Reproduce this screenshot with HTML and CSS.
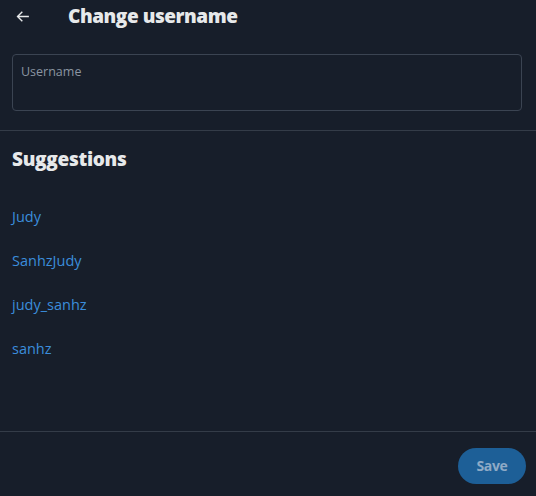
FILE: index.html
```html
<!DOCTYPE html>
<html lang="en">
<head>
<meta charset="utf-8">
<title>Change username</title>
<link rel="stylesheet" href="styles.css">
</head>
<body>
<div class="page">
  <header class="header">
    <svg class="back" viewBox="0 0 24 24" width="17" height="17" aria-hidden="true">
      <path d="M7.414 13l5.043 5.04-1.414 1.42L3.586 12l7.457-7.46 1.414 1.42L7.414 11H21v2H7.414z" fill="#e7e9ea"/>
    </svg>
    <h1 class="title">Change username</h1>
  </header>
  <div class="field">
    <span class="label">Username</span>
  </div>
  <hr class="divider">
  <h2 class="heading">Suggestions</h2>
  <ul class="list">
    <li class="item">Judy</li>
    <li class="item">SanhzJudy</li>
    <li class="item">judy_sanhz</li>
    <li class="item">sanhz</li>
  </ul>
  <hr class="divider bottom">
  <footer class="footer">
    <button class="save">Save</button>
  </footer>
</div>
</body>
</html>
```
FILE: styles.css
```css
html, body {
  margin: 0;
  padding: 0;
  background: #171e2a;
}
.page {
  width: 536px;
  height: 496px;
  font-family: "Open Sans", "Liberation Sans", sans-serif;
  color: #e7e9ea;
}
.header {
  height: 32px;
  display: flex;
  align-items: center;
  padding-left: 14px;
}
.back {
  display: block;
}
.title {
  margin: 0 0 0 37px;
  font-size: 19px;
  font-weight: 800;
  letter-spacing: -0.45px;
  line-height: 24px;
}
.field {
  margin: 22px 14px 0 12px;
  border: 1px solid #3b4452;
  border-radius: 4px;
  padding: 9px 8px 0;
  box-sizing: border-box;
  height: 57px;
}
.label {
  display: block;
  font-size: 12.5px;
  line-height: 16px;
  color: #8b95a1;
}
.divider {
  margin: 19px 0 0;
  border: 0;
  border-top: 1px solid #343c48;
  height: 0;
}
.divider.bottom {
  margin-top: 61px;
}
.heading {
  margin: 16px 0 0 12px;
  font-size: 19px;
  line-height: 24px;
  font-weight: 800;
  letter-spacing: -0.3px;
}
.list {
  list-style: none;
  margin: 23px 0 0;
  padding: 0;
}
.item {
  height: 44px;
  display: flex;
  align-items: center;
  padding-left: 12px;
  font-size: 14.5px;
  color: #3b8ddb;
}
.footer {
  display: flex;
  justify-content: flex-end;
  padding: 16px 10px 0 0;
}
.save {
  width: 68px;
  height: 36px;
  border: 0;
  border-radius: 18px;
  background: #1d5f97;
  color: #8eaac6;
  font-family: "Open Sans", "Liberation Sans", sans-serif;
  font-weight: 700;
  font-size: 14px;
  letter-spacing: -0.3px;
  padding: 0 0 2px;
}
```
